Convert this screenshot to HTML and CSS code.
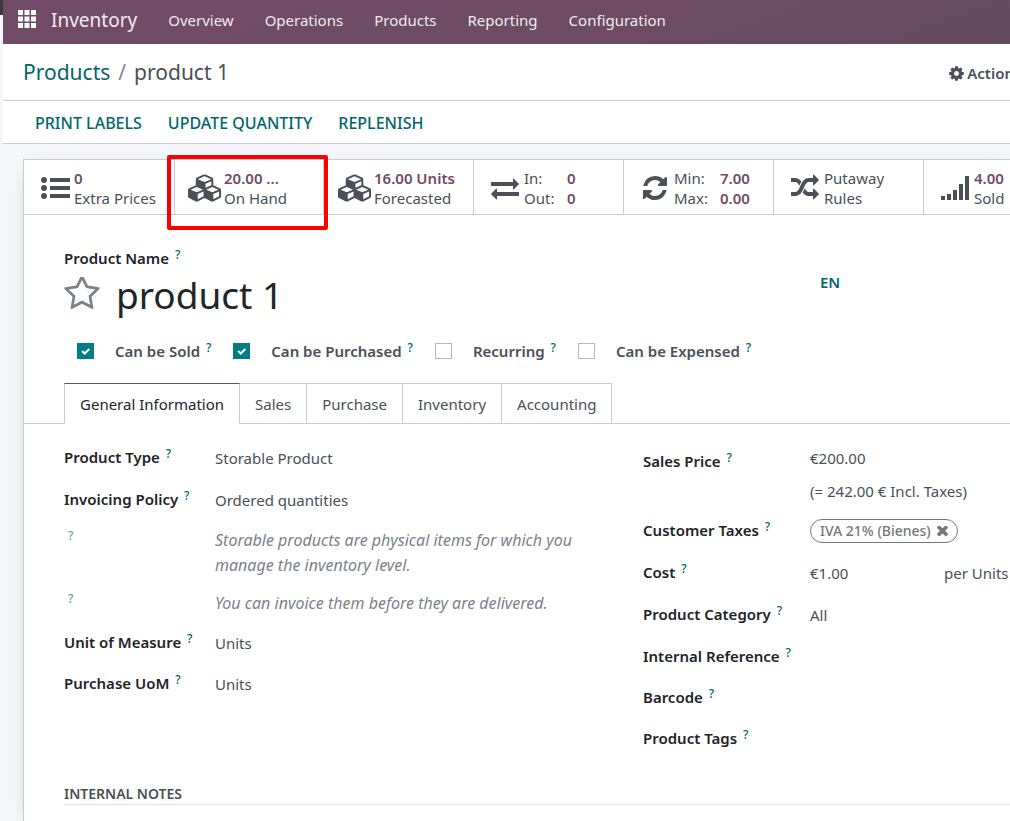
FILE: index.html
```
<!DOCTYPE html>
<html lang="en">
<head>
<meta charset="utf-8">
<title>product 1 - Inventory</title>
<link rel="stylesheet" href="styles.css">
</head>
<body>
<svg class="sprite" aria-hidden="true">
  <symbol id="cubes" viewBox="0 0 2304 1792"><path d="M640 1632l384-192v-314l-384 164v342zm-64-454l404-173-404-173-404 173zm1088 454l384-192v-314l-384 164v342zm-64-454l404-173-404-173-404 173zm-448-293l384-165v-266l-384 164v267zm-64-379l441-189-441-189-441 189zm1088 518v416q0 36-19 67t-52 47l-448 224q-25 14-57 14t-57-14l-448-224q-4-2-7-4-2 2-7 4l-448 224q-25 14-57 14t-57-14l-448-224q-33-16-52-47t-19-67v-416q0-38 21.500-70t56.500-48l434-186v-400q0-38 21.500-70t56.500-48l448-192q23-10 50-10t50 10l448 192q35 16 56.500 48t21.500 70v400l434 186q36 16 57 48t21 70z"/></symbol>
</svg>
<div class="app">
  <nav class="navbar">
    <button class="apps" type="button" aria-label="Home menu">
      <svg viewBox="0 0 18 18" width="18" height="18"><path d="M0 0h5v5H0zM6.500 0h5v5h-5zM13 0h5v5h-5zM0 6.500h5v5H0zM6.500 6.500h5v5h-5zM13 6.500h5v5h-5zM0 13h5v5H0zM6.500 13h5v5h-5zM13 13h5v5h-5z"/></svg>
    </button>
    <a class="brand" href="#">Inventory</a>
    <a class="menu" href="#">Overview</a>
    <a class="menu" href="#">Operations</a>
    <a class="menu" href="#">Products</a>
    <a class="menu" href="#">Reporting</a>
    <a class="menu" href="#">Configuration</a>
  </nav>
  <header class="control">
    <div class="crumbs"><a href="#">Products</a><span class="slash">/</span><span>product 1</span></div>
    <button class="action" type="button">
      <svg viewBox="0 0 1792 1792" width="17" height="17"><path d="M1152 896q0-106-75-181t-181-75-181 75-75 181 75 181 181 75 181-75 75-181zm512-109v222q0 12-8 23t-20 13l-185 28q-19 54-39 91 35 50 107 138 10 12 10 25t-9 23q-27 37-99 108t-94 71q-12 0-26-9l-138-108q-44 23-91 38-16 136-29 186-7 28-36 28h-222q-14 0-24.500-8.500t-11.500-21.500l-28-184q-49-16-90-37l-141 107q-10 9-25 9-14 0-25-11-126-114-165-168-7-10-7-23 0-12 8-23 15-21 51-66.500t54-70.500q-27-50-41-99l-183-27q-13-2-21-12.500t-8-23.500v-222q0-12 8-23t19-13l186-28q14-46 39-92-40-57-107-138-10-12-10-24 0-10 9-23 26-36 98.500-107.500t94.500-71.500q13 0 26 10l138 107q44-23 91-38 16-136 29-186 7-28 36-28h222q14 0 24.500 8.500t11.500 21.500l28 184q49 16 90 37l142-107q9-9 24-9 13 0 25 10 129 119 165 170 7 8 7 22 0 12-8 23-15 21-51 66.500t-54 70.500q26 50 41 98l183 28q13 2 21 12.500t8 23.500z"/></svg>Action
    </button>
  </header>
  <div class="statusbar">
    <button type="button">PRINT LABELS</button>
    <button type="button">UPDATE QUANTITY</button>
    <button type="button">REPLENISH</button>
  </div>
  <main class="sheet">
    <div class="stats">
      <button class="stat" type="button">
        <span class="pic"><svg viewBox="0 0 29 22" width="29" height="22"><circle cx="3" cy="3" r="3"/><circle cx="3" cy="11" r="3"/><circle cx="3" cy="19" r="3"/><path d="M9 1h20v4H9zM9 9h20v4H9zM9 17h20v4H9z"/></svg></span>
        <span class="lines"><b>0</b><span>Extra Prices</span></span>
      </button>
      <button class="stat marked" type="button">
        <span class="pic"><svg width="35" height="28"><use href="#cubes"/></svg></span>
        <span class="lines"><b>20.00 ...</b><span>On Hand</span></span>
      </button>
      <button class="stat" type="button">
        <span class="pic"><svg width="35" height="28"><use href="#cubes"/></svg></span>
        <span class="lines"><b>16.00 Units</b><span>Forecasted</span></span>
      </button>
      <button class="stat" type="button">
        <span class="pic"><svg viewBox="0 0 1792 1792" width="28" height="28"><path d="M1792 1184v192q0 13-9.500 22.500t-22.500 9.500h-1376v192q0 13-9.500 22.500t-22.500 9.500q-12 0-24-10l-319-320q-9-9-9-22 0-14 9-23l320-320q9-9 23-9 13 0 22.500 9.500t9.500 22.500v192h1376q13 0 22.500 9.500t9.500 22.500zm0-544q0 14-9 23l-320 320q-9 9-23 9-13 0-22.500-9.500t-9.500-22.500v-192h-1376q-13 0-22.500-9.500t-9.500-22.500v-192q0-13 9.500-22.500t22.500-9.500h1376v-192q0-14 9-23t23-9q12 0 24 10l319 319q9 9 9 23z"/></svg></span>
        <span class="pairs narrow"><span>In:</span><b>0</b><span>Out:</span><b>0</b></span>
      </button>
      <button class="stat" type="button">
        <span class="pic"><svg viewBox="0 0 1792 1792" width="28" height="28"><path d="M1639 1056q0 5-1 7-64 268-268 434.500t-478 166.500q-146 0-282.500-55t-243.500-157l-129 129q-19 19-45 19t-45-19-19-45v-448q0-26 19-45t45-19h448q26 0 45 19t19 45-19 45l-137 137q71 66 161 102t187 36q134 0 250-65t186-179q11-17 53-117 8-23 30-23h192q13 0 22.500 9.500t9.500 22.500zm25-800v448q0 26-19 45t-45 19h-448q-26 0-45-19t-19-45 19-45l138-138q-148-137-349-137-134 0-250 65t-186 179q-11 17-53 117-8 23-30 23h-199q-13 0-22.500-9.500t-9.500-22.500v-7q65-268 270-434.500t480-166.500q146 0 284 55.500t245 156.500l130-129q19-19 45-19t45 19 19 45z"/></svg></span>
        <span class="pairs"><span>Min:</span><b>7.00</b><span>Max:</span><b>0.00</b></span>
      </button>
      <button class="stat" type="button">
        <span class="pic"><svg viewBox="0 0 1792 1792" width="28" height="28"><path d="M666 481q-60 92-137 273-22-45-37-72.500t-40.500-63.500-51-56.500-63-35-81.500-14.500h-224q-14 0-23-9t-9-23v-192q0-14 9-23t23-9h224q250 0 410 225zm1126 799q0 14-9 23l-320 320q-9 9-23 9-13 0-22.500-9.500t-9.500-22.500v-192q-32 0-85 .5t-81 1-73-1-71-5-64-10.500-63-18.500-58-28.500-59-40-55-53.500-56-69.500q59-93 136-273 22 45 37 72.500t40.500 63.500 51 56.500 63 35 81.500 14.500h256v-192q0-14 9-23t23-9q12 0 24 10l319 319q9 9 9 23zm0-896q0 14-9 23l-320 320q-9 9-23 9-13 0-22.500-9.500t-9.500-22.500v-192h-256q-48 0-87 15t-69 45-51 61.500-45 77.500q-32 62-78 171-29 66-49.500 111t-54 105-64 100-74 83-90 68.500-106.500 42-128 16.500h-224q-14 0-23-9t-9-23v-192q0-14 9-23t23-9h224q48 0 87-15t69-45 51-61.500 45-77.500q32-62 78-171 29-66 49.500-111t54-105 64-100 74-83 90-68.500 106.500-42 128-16.500h256v-192q0-14 9-23t23-9q12 0 24 10l319 319q9 9 9 23z"/></svg></span>
        <span class="lines"><span>Putaway</span><span>Rules</span></span>
      </button>
      <button class="stat" type="button">
        <span class="pic"><svg viewBox="0 0 29 24" width="29" height="24"><path d="M0 20h4v4H0zM6 18h4v6H6zM12 14h4v10h-4zM18 8h4v16h-4zM24 0h4v24h-4z"/></svg></span>
        <span class="lines"><b>4.00</b><span>Sold</span></span>
      </button>
    </div>

    <section class="title">
      <label for="name">Product Name <sup>?</sup></label>
      <div class="name-row">
        <button class="star" type="button" aria-label="Favorite"><svg viewBox="64 128 1664 1587" width="36" height="34"><path d="M1201 1004l306-297-422-62-189-382-189 382-422 62 306 297-73 421 378-199 377 199zm527-357q0 22-26 48l-363 354 86 500q1 7 1 20 0 50-41 50-19 0-40-12l-449-236-449 236q-22 12-40 12-21 0-31.500-14.500t-10.500-35.500q0-6 2-20l86-500-364-354q-25-27-25-48 0-37 56-46l502-73 225-455q19-41 49-41t49 41l225 455 502 73q56 9 56 46z"/></svg></button>
        <input id="name" class="name" type="text" value="product 1">
        <button class="lang" type="button">EN</button>
      </div>
      <div class="checks">
        <input id="sold" type="checkbox" checked><label for="sold">Can be Sold <sup>?</sup></label>
        <input id="purchased" type="checkbox" checked><label for="purchased">Can be Purchased <sup>?</sup></label>
        <input id="recurring" type="checkbox"><label for="recurring">Recurring <sup>?</sup></label>
        <input id="expensed" type="checkbox"><label for="expensed">Can be Expensed <sup>?</sup></label>
      </div>
    </section>

    <div class="tabs" role="tablist">
      <button type="button" role="tab" class="active" aria-selected="true">General Information</button>
      <button type="button" role="tab">Sales</button>
      <button type="button" role="tab">Purchase</button>
      <button type="button" role="tab">Inventory</button>
      <button type="button" role="tab">Accounting</button>
    </div>

    <div class="form">
      <div class="group left">
        <div class="row"><label for="type">Product Type <sup>?</sup></label><select id="type"><option>Storable Product</option></select></div>
        <div class="row"><label for="policy">Invoicing Policy <sup>?</sup></label><select id="policy"><option>Ordered quantities</option></select></div>
        <div class="help"><sup>?</sup><p>Storable products are physical items for which you manage the inventory level.</p></div>
        <div class="help"><sup>?</sup><p>You can invoice them before they are delivered.</p></div>
        <div class="row"><label for="uom">Unit of Measure <sup>?</sup></label><input id="uom" type="text" value="Units"></div>
        <div class="row"><label for="puom">Purchase UoM <sup>?</sup></label><input id="puom" type="text" value="Units"></div>
      </div>
      <div class="group right">
        <div class="row price"><label for="price">Sales Price <sup>?</sup></label><div class="stack"><input id="price" type="text" value="€200.00"><span>(= 242.00 € Incl. Taxes)</span></div></div>
        <div class="row"><label for="taxes">Customer Taxes <sup>?</sup></label><div><span class="tag">IVA 21% (Bienes)<button id="taxes" type="button" aria-label="Remove tax"><svg viewBox="300 500 1190 1190" width="11" height="11"><path d="M1490 1322q0 40-28 68l-136 136q-28 28-68 28t-68-28l-294-294-294 294q-28 28-68 28t-68-28l-136-136q-28-28-28-68t28-68l294-294-294-294q-28-28-28-68t28-68l136-136q28-28 68-28t68 28l294 294 294-294q28-28 68-28t68 28l136 136q28 28 28 68t-28 68l-294 294 294 294q28 28 28 68z" transform="translate(0 67)"/></svg></button></span></div></div>
        <div class="row"><label for="cost">Cost <sup>?</sup></label><div class="cost"><input id="cost" type="text" value="€1.00"><span>per Units</span></div></div>
        <div class="row"><label for="category">Product Category <sup>?</sup></label><input id="category" type="text" value="All"></div>
        <div class="row"><label for="ref">Internal Reference <sup>?</sup></label><input id="ref" type="text"></div>
        <div class="row"><label for="barcode">Barcode <sup>?</sup></label><input id="barcode" type="text"></div>
        <div class="row"><label for="tags">Product Tags <sup>?</sup></label><input id="tags" type="text"></div>
      </div>
    </div>
    <h2 class="notes">INTERNAL NOTES</h2>
  </main>
</div>
</body>
</html>
```
FILE: styles.css
```
* { box-sizing: border-box; }
html { overflow: hidden; background: #f5f6fa; }
body {
  margin: 0;
  min-height: 100vh;
  overflow: hidden;
  font-family: "Noto Sans", "Open Sans", sans-serif;
  font-size: 15px;
  line-height: 20px;
  color: #495057;
  background: linear-gradient(#3a3a3a, #3a3a3a) 0 0 / 3px 15px no-repeat #f5f6fa;
}
button, input, select {
  margin: 0;
  padding: 0;
  border: 0;
  background: none;
  font: inherit;
  color: inherit;
  text-align: left;
}
a { text-decoration: none; }
svg { display: block; fill: currentColor; }
.sprite { position: absolute; width: 0; height: 0; }
.app { min-height: 100vh; margin-left: 3px; display: flex; flex-direction: column; }

.navbar {
  display: flex;
  align-items: center;
  gap: 1px;
  height: 44px;
  padding: 0 0 5px 15px;
  background: linear-gradient(160deg, #714b67 0%, #6d4c63 60%, #644a60 100%);
  color: #f0ebef;
}
.navbar a { color: inherit; white-space: nowrap; }
.apps { color: #fff; padding-bottom: 2px; }
.brand { font-size: 19px; margin: 0 15px 0 14px; }
.menu { padding: 0 15px; }

.control {
  display: flex;
  align-items: center;
  justify-content: space-between;
  height: 57px;
  padding-left: 20px;
  background: #fff;
  border-bottom: 1px solid #c9ccd2;
}
.crumbs { display: flex; gap: 8px; font-size: 21px; line-height: 30px; }
.crumbs a, .statusbar, .lang, sup { color: #01666b; }
.slash { color: #80868e; }
.action { display: flex; align-items: center; gap: 2px; font-weight: 600; margin-right: -4px; padding-top: 2px; color: #495057; }

.statusbar {
  display: flex;
  gap: 26px;
  height: 43px;
  padding: 2px 32px 0;
  background: #fff;
  border-bottom: 1px solid #c9ccd2;
  font-size: 16px;
  font-weight: 500;
}

.sheet {
  flex: 1;
  margin: 15px 0 0 20px;
  background: #fff;
  border: solid #c9ccd2;
  border-width: 1px 0 0 1px;
  box-shadow: 0 5px 20px -10px #0004;
}
.stats { display: flex; height: 55px; border-bottom: 1px solid #c9ccd2; }
.stat {
  position: relative;
  flex: 0 0 150px;
  display: grid;
  grid-template-columns: 38px 1fr;
  align-items: center;
  padding: 2px 0 0 12px;
  white-space: nowrap;
}
.stat + .stat { border-left: 1px solid #c9ccd2; }
.stat.marked { z-index: 1; flex-basis: 149px; padding-left: 11px; }
.marked::after {
  content: "";
  position: absolute;
  inset: -5px -5px -16px -8px;
  border: 4px solid #fe0000;
  border-radius: 2px;
}
.pic { display: flex; justify-content: center; color: #495057; }
.lines { display: grid; }
.stat b { font-weight: 600; color: #714b67; }
.pairs { display: grid; grid-template-columns: 46px auto; justify-content: start; }
.narrow { grid-template-columns: 43px auto; }

sup { font-size: 12px; line-height: 0; vertical-align: 5px; font-weight: 500; }
label sup { margin-left: 2px; }
.title { padding: 33px 40px 0; color: #1f2329; }
.title label { font-weight: 600; }
.name-row { display: flex; align-items: center; height: 55px; }
.star { width: 52px; color: #7b828b; padding-bottom: 3px; }
.name { width: 704px; padding-bottom: 2px; font-size: 37px; line-height: 52px; color: #212529; }
.lang { font-weight: 600; padding-bottom: 27px; }
.checks { display: flex; align-items: center; padding: 18px 0 22px 13px; color: #495057; white-space: nowrap; }
.checks input {
  appearance: none;
  width: 17px;
  height: 16px;
  margin-right: 21px;
  border: 1px solid #b5b7bb;
}
.checks label { margin-right: 22px; }
.checks input:checked {
  border-color: #017e84;
  background: #017e84 url("data:image/svg+xml,%3Csvg xmlns='http://www.w3.org/2000/svg' viewBox='0 0 16 16'%3E%3Cpath d='M4.500 8l2.500 2.500 4.500-4.500' fill='none' stroke='white' stroke-width='2'/%3E%3C/svg%3E") center / 16px no-repeat;
}

.tabs { display: flex; padding-left: 40px; position: relative; }
.tabs::before { content: ""; position: absolute; inset: auto 0 0 0; border-bottom: 1px solid #c9ccd2; }
.tabs button {
  height: 41px;
  padding: 0 15px;
  border: 1px solid #c9ccd2;
  border-left-width: 0;
}
.tabs .active {
  position: relative;
  background: #fff;
  border-left-width: 1px;
  border-top-color: #714b67;
  border-bottom-color: #fff;
  color: #212529;
}

.form { display: grid; grid-template-columns: minmax(360px, 579px) 1fr; padding: 13px 0 0 40px; }
.row { display: grid; align-items: center; min-height: 42px; }
.left .row, .help { grid-template-columns: 151px 1fr; }
.right .row { grid-template-columns: 167px 1fr; }
.row:nth-child(n + 5) { min-height: 41px; }
.row label { color: #1f2329; font-weight: 600; padding-bottom: 2px; }
.row input { width: 100%; }
.row select { appearance: none; }
.help { display: grid; padding: 7px 0 6px; }
.help p { margin: 0; max-width: 380px; font-size: 16px; line-height: 25px; font-style: italic; color: #7b828b; }
.help sup { padding: 8px 0 0 4px; opacity: 0.6; }
.right .price { align-items: start; min-height: 73px; padding-top: 11px; }
.price label { padding-top: 3px; }
.stack { display: grid; gap: 13px; }
.cost { display: grid; grid-template-columns: 134px auto; white-space: nowrap; }
.tag {
  display: inline-flex;
  align-items: center;
  gap: 6px;
  height: 24px;
  padding: 0 9px;
  border: 1px solid #777;
  border-radius: 12px;
  font-size: 14px;
  font-weight: 500;
  color: #777;
  white-space: nowrap;
}
.notes {
  margin: 25px 0 0 40px;
  border-bottom: 1px solid #e3e5e8;
  font-size: 14px;
  font-weight: 600;
  color: #495057;
}
```
